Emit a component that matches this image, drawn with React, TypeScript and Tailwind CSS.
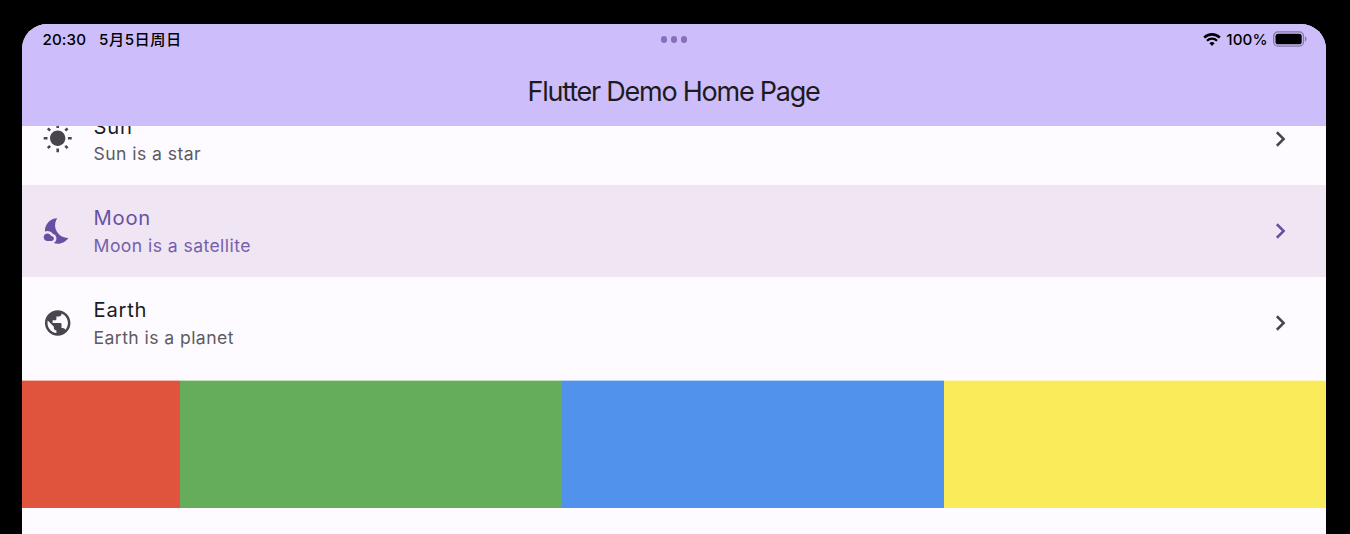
import type { ReactNode } from "react";
import { MdChevronRight, MdNightsStay, MdPublic, MdWbSunny } from "react-icons/md";

type RowProps = {
  icon: ReactNode;
  title: string;
  subtitle: string;
  selected?: boolean;
};

function Row({ icon, title, subtitle, selected }: RowProps) {
  return (
    <div
      className={`flex h-[91.8px] shrink-0 items-center pl-[20.4px] pr-[30.6px] ${
        selected ? "bg-[#f0e5f2] text-[#6750a4]" : "text-[#49454f]"
      }`}
    >
      <span className="translate-x-[0.4px] -translate-y-[0.4px] text-[30.6px]">{icon}</span>
      <div className="ml-[20.6px] flex-1 whitespace-nowrap">
        <div className={`text-[20.2px] leading-[30px] tracking-[0.75px] ${selected ? "" : "text-[#1d1b20]"}`}>
          {title}
        </div>
        <div className={`pt-[0.8px] text-[17.6px] leading-[24.6px] tracking-[0.42px] ${selected ? "text-[#755fad]" : "text-[#5d5962]"}`}>
          {subtitle}
        </div>
      </div>
      <MdChevronRight className="-translate-y-[0.3px] text-[30.6px]" />
    </div>
  );
}

function StatusBar() {
  return (
    <div className="grid h-[31px] grid-cols-3 items-center pl-[20.5px] pr-[19px] text-[15.2px] font-medium text-black">
      <div className="flex items-center gap-[13px] whitespace-nowrap pt-[1.5px]">
        <span className="tracking-[0.1px]">20:30</span>
        <span className="tracking-[0.5px]">5月5日周日</span>
      </div>
      <div className="flex justify-center gap-[3.6px] pr-[1.5px]">
        <i className="size-[6.6px] rounded-full bg-[#8770b9]" />
        <i className="size-[6.6px] rounded-full bg-[#8770b9]" />
        <i className="size-[6.6px] rounded-full bg-[#8770b9]" />
      </div>
      <div className="flex items-center justify-end">
        <svg className="h-[13px] w-[18px]" viewBox="0 0 18 13">
          <path d="M1.2 4.6a11.2 11.2 0 0 1 15.6 0" fill="none" stroke="#000" strokeWidth="2.7" />
          <path d="M4 7.7a7.1 7.1 0 0 1 10 0" fill="none" stroke="#000" strokeWidth="2.3" />
          <path d="M9 12.9 6.4 10.3a3.8 3.8 0 0 1 5.2 0z" />
        </svg>
        <span className="ml-[5px] mr-[5.2px] pt-[1.5px] tracking-[0.15px]">100%</span>
        <svg className="mb-[0.6px] h-[16px] w-[34px]" viewBox="0 0 34 16">
          <rect x="0.7" y="0.9" width="29.8" height="14.2" rx="4.2" fill="none" stroke="#8477a6" strokeWidth="1.3" />
          <rect x="2.5" y="2.7" width="26.2" height="10.6" rx="2.6" />
          <path d="M32 5.6c2 .7 2 4.1 0 4.8z" fill="#8477a6" />
        </svg>
      </div>
    </div>
  );
}

export default function App() {
  return (
    <div className="h-[534px] w-[1350px] overflow-hidden bg-black pl-[22px] pr-[24px] pt-[24px] font-['Inter','Noto_Sans_CJK_SC',sans-serif]">
      <div className="flex h-[510px] flex-col overflow-hidden rounded-t-[25px] bg-[#fdfbff]">
        <header className="h-[102px] shrink-0 bg-[#cdbdfb]">
          <StatusBar />
          <h1 className="mt-[19px] pr-[1px] text-center text-[27px] leading-[36px] tracking-[-1.24px] text-[#1d1b20]">
            Flutter Demo Home Page
          </h1>
        </header>
        <main className="flex min-h-0 flex-1 flex-col overflow-hidden">
          <div className="flex h-[59.2px] shrink-0 flex-col justify-end overflow-hidden">
            <Row icon={<MdWbSunny />} title="Sun" subtitle="Sun is a star" />
          </div>
          <Row icon={<MdNightsStay />} title="Moon" subtitle="Moon is a satellite" selected />
          <Row icon={<MdPublic />} title="Earth" subtitle="Earth is a planet" />
          <div className="mt-[11.2px] flex h-[128px] shrink-0">
            <div className="w-[158px] border-t border-white/60 bg-[#e0533c]" />
            <div className="w-[382px] border-t border-white/60 bg-[#65ad5b]" />
            <div className="w-[382px] border-t border-white/60 bg-[#5092ec]" />
            <div className="flex-1 border-t border-white/60 bg-[#faeb5b]" />
          </div>
        </main>
      </div>
    </div>
  );
}
